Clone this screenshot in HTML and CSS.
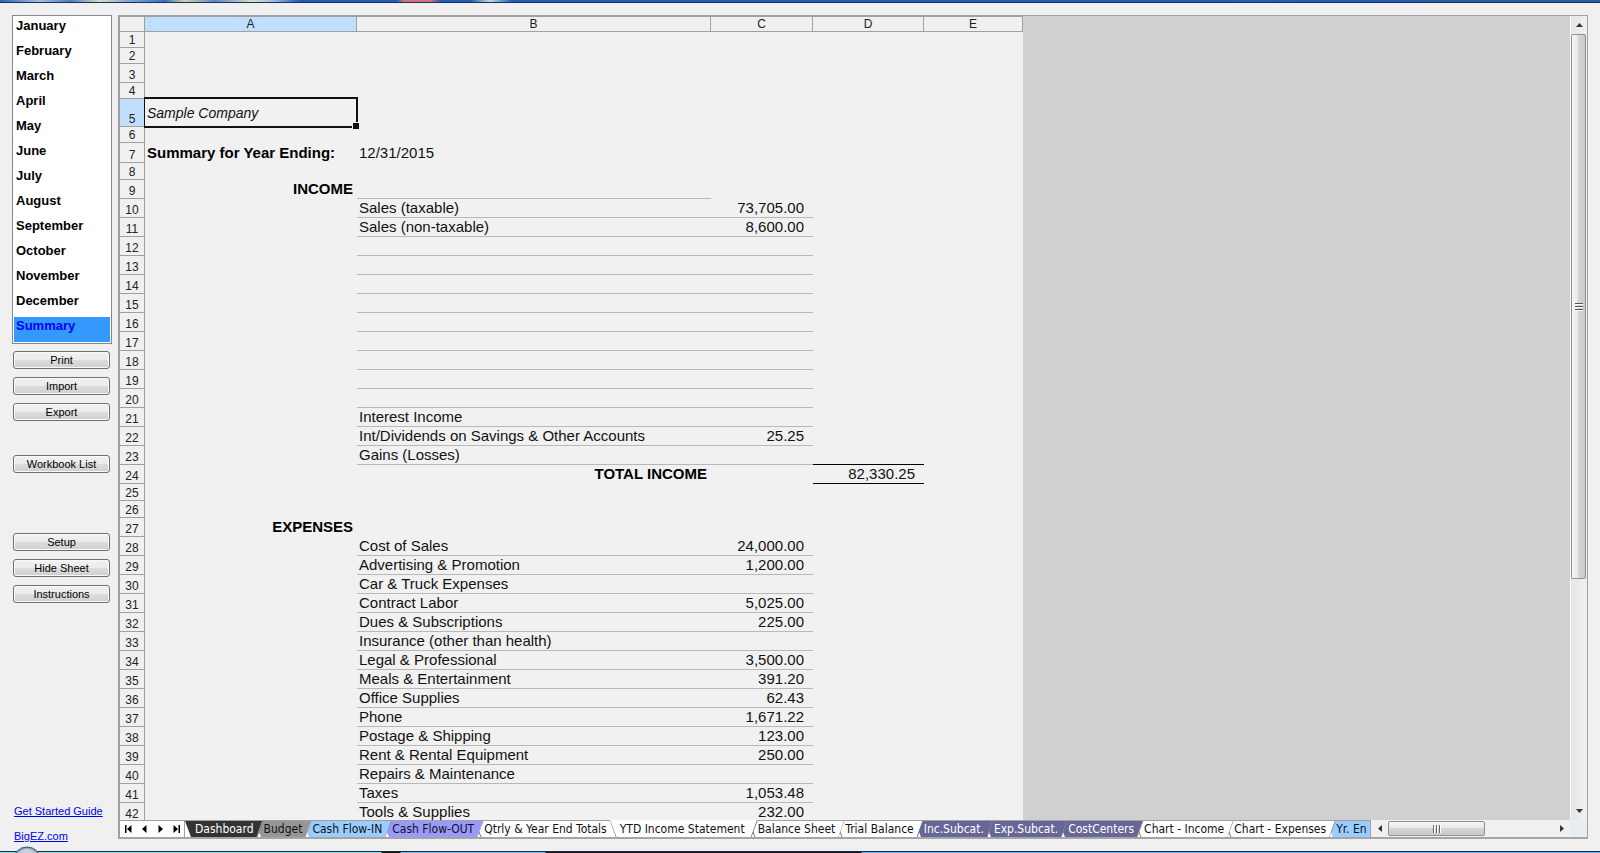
FILE: index.html
```html
<!DOCTYPE html>
<html lang="en">
<head>
<meta charset="utf-8">
<title>Sample Company - Summary</title>
<link rel="stylesheet" href="styles.css">
</head>
<body>
<div class="titlebar"></div>
<div class="workspace">
  <aside class="sidebar">
    <ul class="months">
      <li><button>January</button></li>
      <li><button>February</button></li>
      <li><button>March</button></li>
      <li><button>April</button></li>
      <li><button>May</button></li>
      <li><button>June</button></li>
      <li><button>July</button></li>
      <li><button>August</button></li>
      <li><button>September</button></li>
      <li><button>October</button></li>
      <li><button>November</button></li>
      <li><button>December</button></li>
      <li><button class="current">Summary</button></li>
    </ul>
    <div class="actions">
      <button>Print</button>
      <button>Import</button>
      <button>Export</button>
    </div>
    <div class="actions actions-books">
      <button>Workbook List</button>
    </div>
    <div class="actions actions-setup">
      <button>Setup</button>
      <button>Hide Sheet</button>
      <button>Instructions</button>
    </div>
    <div class="links">
      <a href="#guide">Get Started Guide</a>
      <a href="#site">BigEZ.com</a>
    </div>
  </aside>

  <main class="book">
    <div class="view">
      <div class="grid">
        <table class="cells">
          <colgroup><col class="c-num"><col class="c-a"><col class="c-b"><col class="c-c"><col class="c-d"><col class="c-e"></colgroup>
          <thead><tr><th></th><th class="on">A</th><th>B</th><th>C</th><th>D</th><th>E</th></tr></thead>
          <tbody>
            <tr class="h16"><th>1</th><td></td><td></td><td></td><td></td><td></td></tr>
            <tr class="h16"><th>2</th><td></td><td></td><td></td><td></td><td></td></tr>
            <tr><th>3</th><td></td><td></td><td></td><td></td><td></td></tr>
            <tr class="h16"><th>4</th><td></td><td></td><td></td><td></td><td></td></tr>
            <tr class="h28"><th class="on">5</th><td class="company">Sample Company<span class="cursor"></span></td><td></td><td></td><td></td><td></td></tr>
            <tr class="h16"><th>6</th><td></td><td></td><td></td><td></td><td></td></tr>
            <tr class="h20"><th>7</th><td class="bold">Summary for Year Ending:</td><td>12/31/2015</td><td></td><td></td><td></td></tr>
            <tr class="h17"><th>8</th><td></td><td></td><td></td><td></td><td></td></tr>
            <tr><th>9</th><td class="bold right">INCOME</td><td class="line"></td><td></td><td></td><td></td></tr>
            <tr class="item"><th>10</th><td></td><td>Sales (taxable)</td><td>73,705.00</td><td></td><td></td></tr>
            <tr class="item"><th>11</th><td></td><td>Sales (non-taxable)</td><td>8,600.00</td><td></td><td></td></tr>
            <tr class="item"><th>12</th><td></td><td></td><td></td><td></td><td></td></tr>
            <tr class="item"><th>13</th><td></td><td></td><td></td><td></td><td></td></tr>
            <tr class="item"><th>14</th><td></td><td></td><td></td><td></td><td></td></tr>
            <tr class="item"><th>15</th><td></td><td></td><td></td><td></td><td></td></tr>
            <tr class="item"><th>16</th><td></td><td></td><td></td><td></td><td></td></tr>
            <tr class="item"><th>17</th><td></td><td></td><td></td><td></td><td></td></tr>
            <tr class="item"><th>18</th><td></td><td></td><td></td><td></td><td></td></tr>
            <tr class="item"><th>19</th><td></td><td></td><td></td><td></td><td></td></tr>
            <tr class="item"><th>20</th><td></td><td></td><td></td><td></td><td></td></tr>
            <tr class="item"><th>21</th><td></td><td>Interest Income</td><td></td><td></td><td></td></tr>
            <tr class="item"><th>22</th><td></td><td>Int/Dividends on Savings &amp; Other Accounts</td><td>25.25</td><td></td><td></td></tr>
            <tr class="item"><th>23</th><td></td><td>Gains (Losses)</td><td></td><td class="rule"></td><td></td></tr>
            <tr><th>24</th><td></td><td class="bold right">TOTAL INCOME</td><td></td><td class="rule amount">82,330.25</td><td></td></tr>
            <tr class="h17"><th>25</th><td></td><td></td><td></td><td></td><td></td></tr>
            <tr class="h17"><th>26</th><td></td><td></td><td></td><td></td><td></td></tr>
            <tr><th>27</th><td class="bold right">EXPENSES</td><td></td><td></td><td></td><td></td></tr>
            <tr class="item"><th>28</th><td></td><td>Cost of Sales</td><td>24,000.00</td><td></td><td></td></tr>
            <tr class="item"><th>29</th><td></td><td>Advertising &amp; Promotion</td><td>1,200.00</td><td></td><td></td></tr>
            <tr class="item"><th>30</th><td></td><td>Car &amp; Truck Expenses</td><td></td><td></td><td></td></tr>
            <tr class="item"><th>31</th><td></td><td>Contract Labor</td><td>5,025.00</td><td></td><td></td></tr>
            <tr class="item"><th>32</th><td></td><td>Dues &amp; Subscriptions</td><td>225.00</td><td></td><td></td></tr>
            <tr class="item"><th>33</th><td></td><td>Insurance (other than health)</td><td></td><td></td><td></td></tr>
            <tr class="item"><th>34</th><td></td><td>Legal &amp; Professional</td><td>3,500.00</td><td></td><td></td></tr>
            <tr class="item"><th>35</th><td></td><td>Meals &amp; Entertainment</td><td>391.20</td><td></td><td></td></tr>
            <tr class="item"><th>36</th><td></td><td>Office Supplies</td><td>62.43</td><td></td><td></td></tr>
            <tr class="item"><th>37</th><td></td><td>Phone</td><td>1,671.22</td><td></td><td></td></tr>
            <tr class="item"><th>38</th><td></td><td>Postage &amp; Shipping</td><td>123.00</td><td></td><td></td></tr>
            <tr class="item"><th>39</th><td></td><td>Rent &amp; Rental Equipment</td><td>250.00</td><td></td><td></td></tr>
            <tr class="item"><th>40</th><td></td><td>Repairs &amp; Maintenance</td><td></td><td></td><td></td></tr>
            <tr class="item"><th>41</th><td></td><td>Taxes</td><td>1,053.48</td><td></td><td></td></tr>
            <tr class="item"><th>42</th><td></td><td>Tools &amp; Supplies</td><td>232.00</td><td></td><td></td></tr>
          </tbody>
        </table>
      </div>
      <div class="vscroll">
        <button class="arrow" aria-label="Scroll up"><svg width="7" height="4" viewBox="0 0 7 4"><path d="M0 4L3.500 0L7 4z" fill="#333"/></svg></button>
        <div class="vtrack"><div class="vthumb"><svg width="8" height="9" viewBox="0 0 8 9"><path d="M0 1.500h8M0 4.500h8M0 7.500h8" stroke="#555"/><path d="M0 2.500h8M0 5.500h8M0 8.500h8" stroke="#fff"/></svg></div></div>
        <button class="arrow" aria-label="Scroll down"><svg width="7" height="4" viewBox="0 0 7 4"><path d="M0 0L3.500 4L7 0z" fill="#333"/></svg></button>
      </div>
    </div>

    <div class="strip">
      <div class="steps">
        <button aria-label="First sheet"><svg width="7" height="8" viewBox="0 0 7 8"><path d="M0 0h1.500v8H0zM6.500 0v8L2 4z"/></svg></button>
        <button aria-label="Previous sheet"><svg width="7" height="8" viewBox="0 0 7 8"><path d="M5.500 0v8L1 4z"/></svg></button>
        <button aria-label="Next sheet"><svg width="7" height="8" viewBox="0 0 7 8"><path d="M1.500 0v8L6 4z"/></svg></button>
        <button aria-label="Last sheet"><svg width="7" height="8" viewBox="0 0 7 8"><path d="M5.500 0H7v8H5.500zM.5 0v8L5 4z"/></svg></button>
      </div>
      <div class="tabs">
        <button class="tab first dark"><svg class="edge" viewBox="0 0 7 16"><path class="wedge" d="M0 0L6 16H0z"/></svg>Dashboard</button>
        <button class="tab gray"><svg class="edge" viewBox="0 0 7 16"><path class="wedge" d="M0 16L2 11L4 16z"/><path d="M6 0L0 16"/></svg>Budget</button>
        <button class="tab sky"><svg class="edge" viewBox="0 0 7 16"><path class="wedge" d="M0 16L2 11L4 16z"/><path d="M6 0L0 16"/></svg>Cash Flow-IN</button>
        <button class="tab violet"><svg class="edge" viewBox="0 0 7 16"><path class="wedge" d="M0 16L2 11L4 16z"/><path d="M6 0L0 16"/></svg>Cash Flow-OUT</button>
        <button class="tab"><svg class="edge" viewBox="0 0 7 16"><path d="M6 0L0 16M2 11L4 16"/></svg>Qtrly &amp; Year End Totals</button>
        <button class="tab active"><svg class="edge" viewBox="0 0 7 16"><path d="M0 0L6 16M4 11L2 16"/></svg>YTD Income Statement</button>
        <button class="tab"><svg class="edge" viewBox="0 0 7 16"><path d="M6 0L0 16M2 11L4 16"/></svg>Balance Sheet</button>
        <button class="tab"><svg class="edge" viewBox="0 0 7 16"><path d="M6 0L0 16M2 11L4 16"/></svg>Trial Balance</button>
        <button class="tab indigo"><svg class="edge" viewBox="0 0 7 16"><path class="wedge" d="M0 16L2 11L4 16z"/><path d="M6 0L0 16"/></svg>Inc.Subcat.</button>
        <button class="tab indigo"><svg class="edge" viewBox="0 0 7 16"><path class="wedge" d="M0 16L2 11L4 16z"/><path d="M6 0L0 16"/></svg>Exp.Subcat.</button>
        <button class="tab indigo"><svg class="edge" viewBox="0 0 7 16"><path class="wedge" d="M0 16L2 11L4 16z"/><path d="M6 0L0 16"/></svg>CostCenters</button>
        <button class="tab"><svg class="edge" viewBox="0 0 7 16"><path d="M6 0L0 16M2 11L4 16"/></svg>Chart - Income</button>
        <button class="tab"><svg class="edge" viewBox="0 0 7 16"><path d="M6 0L0 16M2 11L4 16"/></svg>Chart - Expenses</button>
        <button class="tab sky"><svg class="edge" viewBox="0 0 7 16"><path class="wedge" d="M0 16L2 11L4 16z"/><path d="M6 0L0 16"/></svg>Yr. En</button>
      </div>
      <div class="hscroll">
        <button class="arrow" aria-label="Scroll left"><svg width="4" height="7" viewBox="0 0 4 7"><path d="M4 0L0 3.500L4 7z" fill="#333"/></svg></button>
        <div class="htrack"><div class="hthumb"><svg width="9" height="8" viewBox="0 0 9 8"><path d="M1.500 0v8M4.500 0v8M7.500 0v8" stroke="#666"/><path d="M2.500 0v8M5.500 0v8M8.500 0v8" stroke="#fff"/></svg></div></div>
        <button class="arrow" aria-label="Scroll right"><svg width="4" height="7" viewBox="0 0 4 7"><path d="M0 0L4 3.500L0 7z" fill="#333"/></svg></button>
      </div>
      <div class="corner"></div>
    </div>
  </main>
</div>
<div class="taskbar"><svg class="orb" width="30" height="30" viewBox="0 0 30 30"><circle cx="15" cy="15" r="14" fill="#8fa9bd" stroke="#2c5876"/><path d="M5 8Q15 -2 25 8z" fill="#c3d2de"/></svg></div>
</body>
</html>
```
FILE: styles.css
```css
* { box-sizing: border-box; }

body {
  margin: 0;
  height: 100vh;
  display: flex;
  flex-direction: column;
  overflow: hidden;
  background: #f0f0f0;
  color: #111;
  font-family: "Liberation Sans", Arial, sans-serif;
  font-size: 15px;
}

button {
  margin: 0;
  padding: 0;
  border: 0;
  background: none;
  color: inherit;
  font: inherit;
}

.titlebar {
  flex: none;
  height: 3px;
  border-bottom: 1px solid #17305e;
  background: linear-gradient(90deg, #2a62b4 0, #a9bfe0 40px, #4a7cc6 70px, #d9dcc0 100px, #7fa3d8 130px, #3a70bd 165px, #d6d3a0 185px, #5b87c6 215px, #dcdcc4 252px, #a5bfe2 272px, #1c5cb6 300px, #1c5cb6 396px, #d8707a 405px, #d8707a 430px, #1c5cb6 442px, #1c5cb6 470px, #c9d5da 490px, #1c5cb6 512px, #1e5fba 80%, #2a5a9c 100%);
}

.workspace {
  flex: 1;
  min-height: 0;
  display: flex;
  padding: 12px 12px 0 12px;
}

/* Sidebar */
.sidebar {
  flex: none;
  width: 106px;
  display: flex;
  flex-direction: column;
}

.months {
  width: 100px;
  margin: 0;
  padding: 1px;
  border: 1px solid #828790;
  background: #fff;
  list-style: none;
}

.months button {
  display: block;
  width: 100%;
  height: 25px;
  padding: 0 2px 8px;
  line-height: 17px;
  text-align: left;
  color: #000;
  font-size: 13px;
  font-weight: bold;
}

.months .current {
  background: #3399ff;
  color: #0000ff;
}

.actions {
  display: flex;
  flex-direction: column;
  gap: 8px;
  width: 98px;
  padding: 0 0 0 1px;
  margin-top: 7px;
}

.actions-books { margin-top: 34px; }
.actions-setup { margin-top: 60px; }

.actions button {
  height: 18px;
  padding-top: 1px;
  border: 1px solid #707070;
  border-radius: 3px;
  box-shadow: inset 0 0 0 1px #fafafa;
  background: linear-gradient(#f2f2f2 0, #ebebeb 50%, #dddddd 50%, #cfcfcf 100%);
  font-size: 11px;
  line-height: 15px;
  color: #000;
}

.links {
  display: flex;
  flex-direction: column;
  margin-top: auto;
  padding: 0 0 2px 2px;
  font-size: 11px;
  line-height: 25px;
  white-space: nowrap;
}

.links a { color: #0000ee; }

/* Workbook frame */
.book {
  flex: 1;
  min-width: 0;
  display: flex;
  flex-direction: column;
  margin-bottom: 12px;
  border: 1px solid #a0a0a0;
  border-left: 2px solid #a0a0a4;
  border-bottom: 2px solid #a5a5a5;
}

.view {
  flex: 1;
  min-height: 0;
  display: flex;
}

.grid {
  flex: 1;
  min-width: 0;
  overflow: hidden;
  background: #d0d0d0;
}

.cells {
  width: 903px;
  table-layout: fixed;
  border-collapse: separate;
  border-spacing: 0;
  background: #f1f1f1;
  line-height: 17px;
}

.c-num { width: 25px; }
.c-a { width: 212px; }
.c-b { width: 354px; }
.c-c { width: 102px; }
.c-d { width: 111px; }
.c-e { width: 99px; }

.cells th {
  padding: 0;
  border-right: 1px solid #a0a0a0;
  border-bottom: 1px solid #a0a0a0;
  background: #f0f0f0;
  color: #222;
  font-size: 12px;
  font-weight: normal;
  line-height: 13px;
  vertical-align: bottom;
}

.cells thead th {
  height: 16px;
  border-top: 1px solid #a0a0a0;
}

.cells th.on { background: #c0dfff; }

.cells tbody tr { height: 19px; }
.cells tbody .h16 { height: 16px; }
.cells tbody .h17 { height: 17px; }
.cells tbody .h20 { height: 20px; }
.cells tbody .h28 { height: 28px; }

.cells td {
  padding: 0 3px 2px 2px;
  line-height: 16px;
  vertical-align: bottom;
  white-space: nowrap;
}

.cells .bold {
  font-weight: bold;
  color: #000;
}

.cells .right {
  padding-right: 4px;
  text-align: right;
}

.cells .company {
  position: relative;
  padding-bottom: 0;
  vertical-align: middle;
  font-size: 14px;
  font-style: italic;
}

.cursor {
  position: absolute;
  inset: -2px -1px -1px;
  border: 2px solid #111;
  border-left-width: 1px;
}

.cursor::after {
  content: "";
  position: absolute;
  right: -3px;
  bottom: -3px;
  width: 6px;
  height: 6px;
  border: solid #f1f1f1;
  border-width: 1px 0 0 1px;
  background: #111;
}

.cells .line,
.item td:nth-child(3),
.item td:nth-child(4) { border-bottom: 1px solid #b8b8b8; }

.cells .item td,
.cells .amount { padding-bottom: 1px; }

.cells .item td:nth-child(4),
.cells .amount {
  padding-right: 9px;
  text-align: right;
}

.cells .rule { border-bottom: 1px solid #000; }

/* Scroll bars */
.arrow {
  flex: none;
  display: flex;
  align-items: center;
  justify-content: center;
}

.vscroll {
  flex: none;
  width: 17px;
  display: flex;
  flex-direction: column;
  border-left: 1px solid #fafafa;
  background: linear-gradient(90deg, #e6e6e6, #f0f0f0);
}

.vscroll .arrow { height: 18px; }

.vtrack {
  flex: 1;
  padding-right: 1px;
}

.vthumb {
  height: 71%;
  display: flex;
  align-items: center;
  justify-content: center;
  border: 1px solid #909090;
  border-radius: 2px;
  background: linear-gradient(90deg, #f6f6f6 0, #e8e8ea 45%, #d4d4d8 50%, #c8c8cf 100%);
}

.strip {
  flex: none;
  display: flex;
  height: 17px;
  background: #f0f0f0;
}

.steps {
  flex: none;
  display: flex;
  width: 65px;
  border-top: 1px solid #a0a0a0;
  border-right: 1px solid #a0a0a0;
  background: #fff;
}

.steps button {
  flex: 1;
  display: flex;
  align-items: center;
  justify-content: center;
}

.tabs {
  flex: 1;
  min-width: 0;
  display: flex;
  overflow: hidden;
  background: #fff;
  font-family: "DejaVu Sans Condensed", "DejaVu Sans", sans-serif;
  font-stretch: condensed;
  font-size: 12px;
}

.tab {
  position: relative;
  flex: none;
  margin-right: -6px;
  padding: 1px 9px 0 7px;
  border-top: 1px solid #a0a0a0;
  background: #fff;
  clip-path: polygon(6px 0, 100% 0, calc(100% - 6px) 100%, 0 100%);
  line-height: 15px;
  white-space: nowrap;
}

.tab.first {
  padding-left: 10px;
  clip-path: polygon(0 0, 100% 0, calc(100% - 6px) 100%, 0 100%);
}

.tab.active {
  padding-left: 10px;
  padding-right: 12px;
  border-top-color: #fff;
  clip-path: polygon(0 0, 100% 0, calc(100% - 6px) 100%, 6px 100%);
}

.dark { background: #333; color: #fff; }
.gray { background: #969696; }
.sky { background: #99ccff; }
.violet { background: #9999ff; }
.indigo { background: #666699; color: #fff; }

.edge {
  position: absolute;
  left: 0;
  top: 0;
  width: 7px;
  height: 16px;
  fill: none;
  stroke: #777;
}

.edge .wedge { fill: #fff; stroke: none; }

.hscroll {
  flex: none;
  display: flex;
  width: 200px;
  border-left: 1px solid #a0a0a0;
}

.hscroll .arrow { width: 17px; }

.htrack {
  flex: 1;
  padding: 1px 0;
}

.hthumb {
  width: 59%;
  height: 15px;
  display: flex;
  align-items: center;
  justify-content: center;
  border: 1px solid #909090;
  border-radius: 2px;
  background: linear-gradient(#f6f6f6 0, #e8e8ea 45%, #d4d4d8 50%, #c8c8cf 100%);
}

.corner {
  flex: none;
  width: 17px;
  background: #e6eef4;
}

.taskbar {
  position: relative;
  flex: none;
  height: 2px;
  border-top: 1px solid #12303c;
  background: linear-gradient(90deg, #8fdcec 0, #8fdcec 381px, #081010 382px, #081010 400px, #7ab8e8 401px, #7ab8e8 545px, #101018 546px, #101018 861px, #6ab0f0 862px, #6ab0f0 100%);
}

.orb {
  position: absolute;
  left: 12px;
  top: -6px;
}
```
